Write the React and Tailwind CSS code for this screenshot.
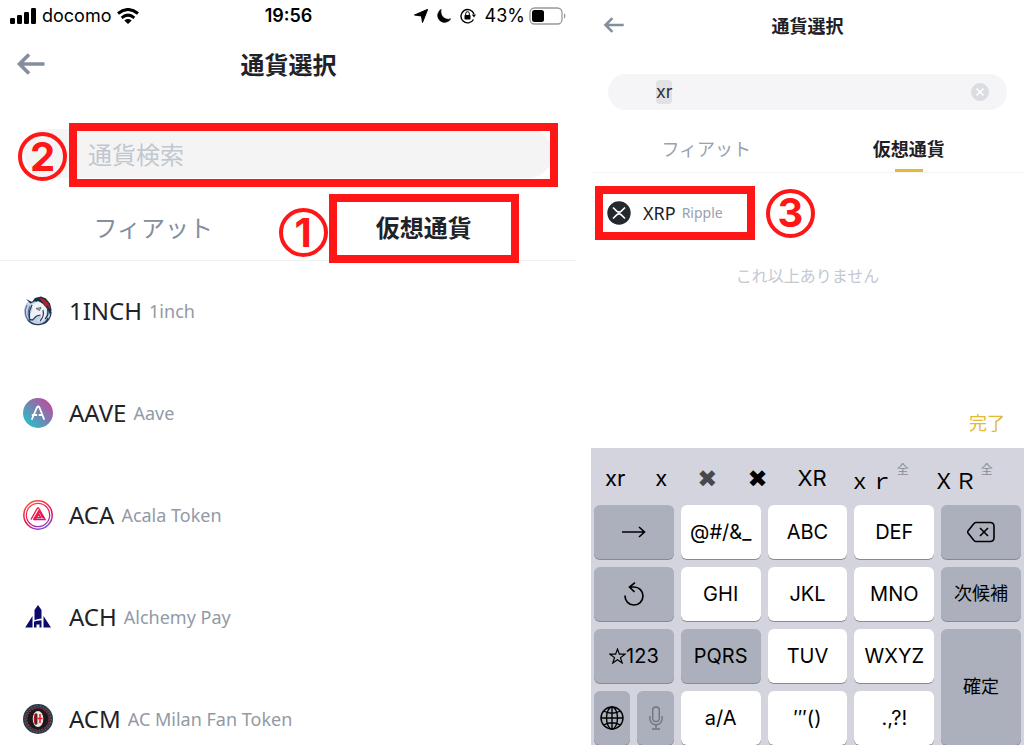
import React,{useState} from "react";

const coins=[
    {symbol:"1INCH",name:"1inch",Icon:InchIcon},
    {symbol:"AAVE",name:"Aave",Icon:AaveIcon},
    {symbol:"ACA",name:"Acala Token",Icon:AcalaIcon},
    {symbol:"ACH",name:"Alchemy Pay",Icon:AlchemyIcon},
    {symbol:"ACM",name:"AC Milan Fan Token",Icon:MilanIcon},
];

// full-width candidates offered by the keyboard
const wideCandidates=["\uff58\uff52","\uff38\uff32"];

function InchIcon() {
    return (
        <svg viewBox="0 0 30 30" className="size-[30px]" aria-hidden="true">
            <path d="M6 5C2 8 .8 12 1 16c.5 7 6 13 14 13 8 0 13-6 13.500-13 .2-4-1-7-3-9z" fill="#c3d0e4" />
            <path d="M4 9C1 15 2 22 7 26M7 10c-3 6-2 11 1 15" fill="none" stroke="#5f7697" strokeWidth="1.200" />
            <path d="M3 3l6 3 3-4 6-1.500 5 2 4 5 1.500 6-1 6-4-8-6-5-6-1-4 2z" fill="#1b2c45" />
            <path d="M16 2c6 0 11 5 11.500 12l-3-4-2 .5-3-4.500z" fill="#b3202b" />
            <path d="M9 9l6-4 5 3 3.500 5v7c-1 4-5 6-9 5 3-1 4-3 3-6l-4 1-4 4-3-1v-4l3-5z" fill="#eef2f8" />
            <path d="M9 9l-2.500 6v8l3 1 4-4 4-1M20 14c1 4 0 8-3 11" fill="none" stroke="#243b5a" strokeWidth="1.200" />
            <path d="M13 12.500l5-1-1.500 3z" fill="#c5b04c" stroke="#243b5a" strokeWidth="0.600" />
            <path d="M5 24c6 7 17 6 20-2M24 11c2 5 1 9-2 12M28 16c0 5-3 10-8 12" fill="none" stroke="#243b5a" strokeWidth="1.300" />
        </svg>
    )
}

function AaveIcon() {
    return (
        <svg viewBox="0 0 30 30" className="size-[30px]" aria-hidden="true">
            <defs>
                <linearGradient id="aave" x1="0" y1="1" x2="1" y2="0">
                    <stop offset="0.150" stopColor="#2ebac6" />
                    <stop offset="0.850" stopColor="#b6509e" />
                </linearGradient>
            </defs>
            <circle cx="15" cy="15" r="15" fill="url(#aave)" />
            <path d="M9 21l5-11.500q1.200-2 2.400 0L21 21M9.500 17h4M16.500 17h2.500" fill="none" stroke="#fff" strokeWidth="1.800" strokeLinecap="round" />
        </svg>
    )
}

function AcalaIcon() {
    return (
        <svg viewBox="0 0 30 30" className="size-[30px]" aria-hidden="true">
            <defs>
                <linearGradient id="acala" gradientUnits="userSpaceOnUse" x1="9" y1="0" x2="23" y2="30">
                    <stop offset="0" stopColor="#ff4c3b" />
                    <stop offset="0.600" stopColor="#e40c5b" />
                    <stop offset="1" stopColor="#645aff" />
                </linearGradient>
            </defs>
            <g fill="none" stroke="url(#acala)">
                <circle cx="15" cy="15" r="14.200" strokeWidth="1.500" />
                <circle cx="15" cy="15" r="11.700" strokeWidth="1.200" />
                <path d="M8 19.500l6.500-11.500h1L22 19.500H12l3.500-6 2.500 4.500M10.500 20l5.500-9.500 4 7.500M13 17.500h5.500" strokeWidth="1.500" />
            </g>
        </svg>
    )
}

function AlchemyIcon() {
    return (
        <svg viewBox="0 0 30 30" className="size-[30px]" fill="#0a0a6b" aria-hidden="true">
            <path d="M15 3l3.500 5v8.500c-2 .3-4.500.5-7 1.800V8z" />
            <path d="M9.500 14v11.500H2.200zM20.500 14v11.500h7.500z" />
            <path d="M11 19.800c2.500-1 4.500-1.300 7.500-1.500v7.200h-2V22.500h-3v3H11z" />
        </svg>
    )
}

function MilanIcon() {
    return (
        <svg viewBox="0 0 30 30" className="size-[30px]" aria-hidden="true">
            <circle cx="15" cy="15" r="15" fill="#2c3946" />
            <circle cx="15" cy="15" r="13" fill="none" stroke="#77818b" strokeWidth="1" strokeDasharray="1 2" />
            <circle cx="15" cy="15" r="11" fill="#17191d" stroke="#a92731" strokeWidth="1.200" strokeDasharray="2 1" />
            <ellipse cx="15" cy="15" rx="5.300" ry="8" fill="#ece7e5" />
            <path d="M11.500 10h3v10h-3c-1-3-1-7 0-10z" fill="#b91c28" />
            <path d="M13 9v12" stroke="#17191d" />
            <path d="M17 10v9M14.500 14.500h5" stroke="#e11d2a" strokeWidth="1.500" />
        </svg>
    )
}

function XrpIcon() {
    return (
        <svg viewBox="0 0 24 24" className="size-6 shrink-0" aria-hidden="true">
            <circle cx="12" cy="12" r="11.700" fill="#23292f" />
            <path d="M6 6.500l3.700 3.600q2.300 2 4.600 0L18 6.500M6 17.500l3.700-3.600q2.300-2 4.600 0l3.700 3.600" fill="none" stroke="#fff" strokeWidth="1.600" />
        </svg>
    )
}

const BackArrow=({className})=> (
    <svg viewBox="0 0 28 22" className={className} fill="none" stroke="#848e9c" strokeWidth="3.600" aria-hidden="true">
        <path d="M12.500 1.500L3 11l9.500 9.500M3 11h25" />
    </svg>
)

// numbered step marker
const Step=({number,className=""})=> (
    <span className={`flex size-[49px] items-center justify-center rounded-full border-4 border-[#ff1616] font-[Inter,sans-serif] text-[40px] leading-none font-bold text-[#ff1616] ${className}`}>{number}</span>
)

const StatusBar=()=> (
    <div className="grid h-8 grid-cols-[1fr_auto_1fr] items-center px-[10px] font-[Inter,sans-serif] text-lg text-black">
        <div className="flex items-center gap-[6px]">
            <svg viewBox="0 0 26 16" className="h-4 w-[26px]" aria-label="signal">
                <rect x="0" y="10" width="5" height="6" rx="1.200" />
                <rect x="7" y="7" width="5" height="9" rx="1.200" />
                <rect x="14" y="4" width="5" height="12" rx="1.200" />
                <rect x="21" y="0" width="5" height="16" rx="1.200" />
            </svg>
            <span>docomo</span>
            <svg viewBox="0 0 22 16" className="h-4 w-[22px]" fill="none" stroke="#000" strokeWidth="3" aria-label="wifi">
                <path d="M1 5.500q10-8 20 0M4.700 9.800q6.300-5.300 12.600 0" />
                <path d="M7.300 12.500q3.700-2.800 7.400 0L11 16z" fill="#000" stroke="none" />
            </svg>
        </div>
        <span className="font-semibold">19:56</span>
        <div className="flex items-center justify-end gap-[9px]">
            <svg viewBox="0 0 14 14" className="size-[14px]" aria-hidden="true"><path d="M13.700.3L8.500 13.500 7.500 7 .5 6z" stroke="#000" strokeWidth="1" strokeLinejoin="round" /></svg>
            <svg viewBox="0 0 14 14" className="size-[14px]" aria-hidden="true"><path d="M4.200.3A7 7 0 1 0 13.800 9.700C8 12 2.500 6.500 4.200.3z" stroke="#000" strokeWidth="0.600" /></svg>
            <svg viewBox="0 0 16 16" className="size-4" aria-hidden="true">
                <path d="M13.500 11.500A6.700 6.700 0 1 1 14 6" fill="none" stroke="#000" strokeWidth="1.400" />
                <path d="M11.800 6.500h4.200L14 9.500z" />
                <rect x="4.500" y="7" width="6" height="4.500" rx="0.800" />
                <path d="M5.700 7V5.500a1.800 1.800 0 0 1 3.600 0V7" fill="none" stroke="#000" />
            </svg>
            <div className="flex items-center gap-1">
                <span>43%</span>
                <svg viewBox="0 0 38 18" className="h-[18px] w-[38px]" aria-label="battery">
                    <rect x="1" y="1" width="32" height="16" rx="4.500" fill="none" stroke="#999" strokeWidth="1.300" />
                    <rect x="3" y="3" width="12" height="12" rx="2.500" />
                    <path d="M35 6q3 3 0 6z" fill="#999" />
                </svg>
            </div>
        </div>
    </div>
)

const CurrencyList=()=> {
    const [search,setSearch]=useState("");
    return (
        <section className="flex flex-col">
            <StatusBar />
            <header className="grid h-16 grid-cols-[1fr_auto_1fr] items-center px-4">
                <button type="button" aria-label="戻る"><BackArrow className="h-[22px] w-[29px]" /></button>
                <h1 className="text-2xl font-bold text-[#1e2329]">通貨選択</h1>
            </header>
            <div className="relative mx-6 mt-[33px]">
                <input
                    type="text"
                    aria-label="通貨検索"
                    placeholder="通貨検索"
                    value={search}
                    onChange={(e)=>setSearch(e.target.value)}
                    className="h-[49px] w-full rounded-full bg-[#f4f4f4] pr-6 pb-px pl-16 text-2xl text-[#1e2329] outline-none placeholder:text-[#c2c7cf]" />
                <div className="pointer-events-none absolute -top-[6px] -right-[5px] -bottom-[9px] left-[45px] border-8 border-[#ff1616]"></div>
                <Step number={2} className="absolute top-[3px] -left-[6px]" />
            </div>
            <div className="mt-4 flex h-[67px] border-b border-[#f0f1f3] px-[18px]">
                <button type="button" className="flex-1 text-2xl text-[#848e9c]">フィアット</button>
                <button type="button" className="relative flex-1 text-2xl font-bold text-[#1e2329]">
                    仮想通貨
                    <span className="absolute inset-x-10 top-0 -bottom-[3px] border-8 border-[#ff1616]"></span>
                    <Step number={1} className="absolute top-[14px] -left-[10px]" />
                </button>
            </div>
            <ul className="mt-[35px] flex flex-col gap-[72px] pl-[23px]">
                {coins.map(({symbol,name,Icon}) => (
                    <li key={symbol}>
                        <button type="button" className="flex h-[30px] items-center font-['Noto_Sans',sans-serif]">
                            <Icon />
                            <span className="ml-4 text-2xl text-[#1e2329]">{symbol}</span>
                            <span className="ml-[7px] text-lg text-[#929aa5]">{name}</span>
                        </button>
                    </li>
                ))}
            </ul>
        </section>
    )
}

const Key=({children,dark,className="",label})=> (
    <button
        type="button"
        aria-label={label}
        className={`flex items-center justify-center rounded-md shadow-[0_1px_0_#898a8d] ${dark ? "bg-[#acb0bd]" : "bg-white"} ${className}`}>{children}</button>
)

const Keyboard=()=> (
    <div className="bg-[#d3d4dd] px-[3px] font-[Inter,'Noto_Sans_CJK_JP',sans-serif] text-xl text-black">
        <div className="flex h-[57px] items-center gap-[30px] pt-1 pl-[11px] text-[22px]">
            <button type="button">xr</button>
            <button type="button">x</button>
            <button type="button" className="font-['DejaVu_Sans',sans-serif] text-2xl text-[#48484c]">✖</button>
            <button type="button" className="font-['DejaVu_Sans',sans-serif] text-2xl">✖</button>
            <button type="button">XR</button>
            <div className="-ml-2 flex gap-6">
                {wideCandidates.map((text) => (
                    <button key={text} type="button" className="flex items-center font-['Noto_Sans_CJK_JP',sans-serif] leading-7">
                        {text}
                        <span className="mb-5 ml-1 text-xs text-[#8b8c93]">全</span>
                    </button>
                ))}
            </div>
        </div>
        <div className="grid auto-rows-[54px] grid-cols-5 gap-x-[7px] gap-y-2">
            <Key dark label="次へ">
                <svg viewBox="0 0 24 12" className="h-3 w-6" fill="none" stroke="#000" strokeWidth="1.600"><path d="M0 6h22M17 1l5.500 5-5.500 5" /></svg>
            </Key>
            <Key>@#/&amp;_</Key>
            <Key>ABC</Key>
            <Key>DEF</Key>
            <Key dark label="削除">
                <svg viewBox="0 0 28 22" className="h-[22px] w-7" fill="none" stroke="#000" strokeWidth="1.600" strokeLinejoin="round">
                    <path d="M9 1.500h14q4 0 4 4v11q0 4-4 4H9q-1 0-2-1L1 12q-.8-1 0-2l6-7.500q1-1 2-1zM13 7l8 8M21 7l-8 8" />
                </svg>
            </Key>
            <Key dark label="元に戻す">
                <svg viewBox="0 0 22 24" className="h-6 w-[22px]" fill="none" stroke="#000" strokeWidth="1.700"><path d="M2 13.500a9 9 0 1 0 9-8.500H7M12 .7L6.500 5l5 5" /></svg>
            </Key>
            <Key>GHI</Key>
            <Key>JKL</Key>
            <Key>MNO</Key>
            <Key dark className="text-lg">次候補</Key>
            <Key dark>
                <svg viewBox="0 0 17 16" className="h-4 w-[17px]" fill="none" stroke="#000" strokeWidth="1.200" aria-hidden="true"><path d="M8.500 1l1.900 5.200h5.600l-4.500 3.400 1.700 5.400-4.700-3.300L3.800 15l1.700-5.400L1 6.200h5.600z" /></svg>
                123
            </Key>
            <Key dark>PQRS</Key>
            <Key>TUV</Key>
            <Key>WXYZ</Key>
            <Key dark className="row-span-2 text-lg">確定</Key>
            <div className="grid grid-cols-2 gap-[7px]">
                <Key dark label="キーボード切替">
                    <svg viewBox="0 0 24 24" className="size-6" fill="none" stroke="#000" strokeWidth="1.400">
                        <circle cx="12" cy="12" r="11" />
                        <ellipse cx="12" cy="12" rx="5.500" ry="11" />
                        <path d="M12 1v22M1 12h22M3.500 5q8.500 4.500 17 0M3.500 19q8.500-4.500 17 0" />
                    </svg>
                </Key>
                <Key dark label="音声入力">
                    <svg viewBox="0 0 14 24" className="h-6 w-[14px]" fill="none" stroke="#72757f" strokeWidth="1.400">
                        <rect x="3.700" y="1" width="6.600" height="14.500" rx="3.300" />
                        <path d="M.8 10v2.500a6.200 6.200 0 0 0 12.400 0V10M7 18.700V23M3 23h8" />
                    </svg>
                </Key>
            </div>
            <Key>a/A</Key>
            <Key>′″()</Key>
            <Key>.,?!</Key>
        </div>
    </div>
)

const CurrencySearch=()=> {
    const [search,setSearch]=useState("xr");
    return (
        <section className="flex flex-col">
            <header className="grid h-[50px] grid-cols-[1fr_auto_1fr] items-center px-3">
                <button type="button" aria-label="戻る"><BackArrow className="h-4 w-[21px]" /></button>
                <h1 className="text-lg font-bold text-[#1e2026]">通貨選択</h1>
            </header>
            <div className="relative mx-[17px] mt-6 flex h-9 items-center rounded-full bg-[#f5f5f8] pr-[18px] pl-12">
                {search==="xr" && <span className="absolute left-12 h-6 w-4 rounded bg-[#e2e2e4]"></span>}
                <input
                    type="text"
                    aria-label="通貨検索"
                    value={search}
                    onChange={(e)=>setSearch(e.target.value)}
                    className="relative min-w-0 flex-1 bg-transparent font-[Inter,sans-serif] text-lg leading-6 text-[#33343a] outline-none" />
                <button type="button" aria-label="クリア" onClick={()=>setSearch("")}>
                    <svg viewBox="0 0 18 18" className="size-[18px]"><circle cx="9" cy="9" r="9" fill="#d9dce2" /><path d="M5.500 5.500l7 7M12.500 5.500l-7 7" stroke="#fff" strokeWidth="1.500" /></svg>
                </button>
            </div>
            <div className="mt-[13px] flex h-[50px] border-b border-[#f2f3f5] px-[14px] text-lg">
                <button type="button" className="flex-1 text-[#9aa1ad]">フィアット</button>
                <button type="button" className="relative flex-1 font-bold text-[#1e2026]">
                    仮想通貨
                    <span className="absolute bottom-0 left-1/2 h-[3px] w-7 -translate-x-1/2 bg-[#e3b936]"></span>
                </button>
            </div>
            <div className="mt-[13px] flex items-center pl-1">
                <button type="button" className="flex h-[54px] w-40 items-center border-8 border-[#ff1616] pl-1 font-['Noto_Sans',sans-serif]">
                    <XrpIcon />
                    <span className="ml-3 text-lg text-[#1e2026]">XRP</span>
                    <span className="ml-[6px] text-sm text-[#9aa1ad]">Ripple</span>
                </button>
                <Step number={3} className="ml-[11px]" />
            </div>
            <p className="mt-[23px] text-center text-base text-[#c4c8cf]">これ以上ありません</p>
            <button type="button" className="mt-auto mr-[19px] h-[52px] self-end text-lg text-[#e3b936]">完了</button>
            <Keyboard />
        </section>
    )
}

const App=()=> {
    return (
        <main className="grid min-h-screen grid-cols-[577fr_433fr] gap-x-[14px] bg-white font-['Noto_Sans_CJK_JP',sans-serif]">
            <CurrencyList />
            <CurrencySearch />
        </main>
    )
}
export default App;
